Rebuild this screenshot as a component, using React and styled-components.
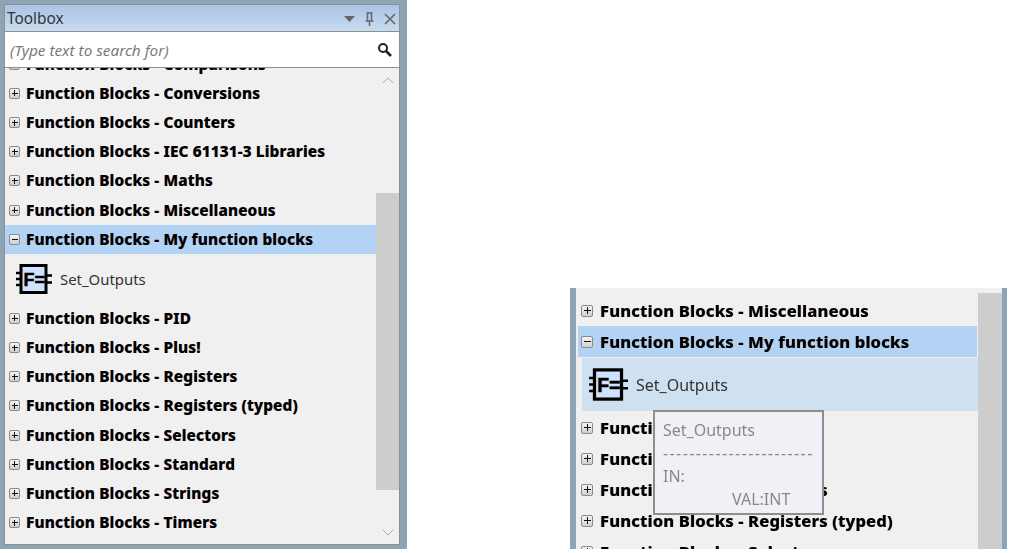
import React from "react";
import styled, { createGlobalStyle } from "styled-components";

const Global = createGlobalStyle`
  html, body { margin: 0; padding: 0; background: #fff; }
  body { width: 1009px; height: 553px; overflow: hidden; font-family: "Noto Sans", "Open Sans", sans-serif; }
`;

const Page = styled.div`
  display: flex;
  align-items: flex-start;
  width: 1009px;
  height: 553px;
  filter: blur(0.4px);
`;

const Frame = styled.section`
  box-sizing: border-box;
  width: 407px;
  height: 549px;
  padding: 4px 7px 4px 4px;
  background: #8ca4b4;
  display: flex;
  flex-direction: column;
`;

const Window = styled.div`
  flex: 1;
  min-height: 0;
  border: 1px solid #8f8f8f;
  background: #f0f0f0;
  display: flex;
  flex-direction: column;
`;

const TitleBar = styled.header`
  height: 26px;
  flex: none;
  box-sizing: border-box;
  display: flex;
  align-items: center;
  justify-content: space-between;
  padding: 1px 3px 0 2px;
  background: linear-gradient(#a9c4e4, #c8dbf0);
  font-size: 15.4px;
  color: #333;
`;

const TitleIcons = styled.div`
  display: flex;
  align-items: center;
  gap: 10px;
  color: #666;
`;

const SearchBox = styled.div`
  height: 37px;
  flex: none;
  box-sizing: border-box;
  border-top: 1px solid #8f8f8f;
  border-bottom: 1px solid #8f8f8f;
  background: #fff;
  display: flex;
  align-items: center;
  justify-content: space-between;
  padding: 0 7px 0 5px;
  font-size: 15.3px;
  font-style: italic;
  color: #7a7a7a;
`;

const Body = styled.div`
  flex: 1;
  min-height: 0;
  display: flex;
`;

const List = styled.div`
  flex: 1;
  min-width: 0;
  overflow: hidden;
  padding-left: ${(p) => p.$inset}px;
`;

const Scrolled = styled.div`
  margin-top: ${(p) => p.$offset}px;
`;

const Row = styled.div`
  height: ${(p) => p.$h}px;
  display: flex;
  align-items: center;
  gap: ${(p) => p.$gap}px;
  padding-left: ${(p) => p.$pl}px;
  margin-right: ${(p) => p.$mr || 0}px;
  background: ${(p) => (p.$sel ? "#b2d3f3" : "transparent")};
  font-weight: 800;
  font-size: ${(p) => p.$fs}px;
  letter-spacing: 0.1px;
  color: #000;
  white-space: nowrap;
  text-shadow: 0.4px 0 rgba(230, 120, 0, 0.35), -0.4px 0 rgba(0, 70, 220, 0.35);
`;

const Toggle = styled.span`
  box-sizing: border-box;
  flex: none;
  width: ${(p) => p.$s}px;
  height: ${(p) => p.$s}px;
  border: 1px solid #8a8a8a;
  border-radius: 2px;
  background: linear-gradient(#f4f4f4, #cfcfcf);
  position: relative;
  &::before {
    content: "";
    position: absolute;
    left: 1.5px;
    right: 1.5px;
    top: calc(50% - 0.5px);
    height: 1px;
    background: #111;
  }
  &::after {
    content: "";
    display: ${(p) => (p.$open ? "none" : "block")};
    position: absolute;
    top: 1.5px;
    bottom: 1.5px;
    left: calc(50% - 0.5px);
    width: 1px;
    background: #111;
  }
`;

const Item = styled.div`
  height: ${(p) => p.$h}px;
  display: flex;
  align-items: center;
  gap: 8px;
  padding-left: ${(p) => p.$pl}px;
  margin-left: ${(p) => p.$ml || 0}px;
  margin-top: ${(p) => p.$mt || 0}px;
  margin-bottom: ${(p) => p.$mb || 0}px;
  background: ${(p) => p.$bg || "transparent"};
  font-size: ${(p) => p.$fs}px;
  color: #333;
`;

const Scrollbar = styled.aside`
  flex: none;
  width: ${(p) => p.$w}px;
  display: flex;
  flex-direction: column;
  align-items: center;
  color: #a9a9a9;
`;

const Arrow = styled.div`
  height: ${(p) => p.$h}px;
  flex: none;
  display: flex;
  align-items: center;
`;

const Thumb = styled.div`
  align-self: stretch;
  flex: none;
  height: ${(p) => p.$h}px;
  margin-top: ${(p) => p.$mt}px;
  margin-bottom: auto;
  background: #cdcdcd;
`;

const Second = styled.section`
  position: relative;
  box-sizing: border-box;
  flex: none;
  width: 437px;
  height: 261px;
  margin: 288px 0 0 163px;
  border-left: 6px solid #8ca4b4;
  border-right: 5px solid #8ca4b4;
  background: #f0f0f0;
  display: flex;
  overflow: hidden;
`;

const Tooltip = styled.div`
  position: absolute;
  left: 77px;
  top: 122px;
  box-sizing: border-box;
  width: 171px;
  height: 105px;
  padding: 7px 8px;
  border: 2px solid #8e8e8e;
  background: #eff1f7;
  color: #888;
  font-size: 16px;
  line-height: 23px;
  white-space: nowrap;
  overflow: hidden;
`;

const TipLine = styled.div`
  padding-left: ${(p) => p.$pl || 0}px;
  letter-spacing: ${(p) => p.$ls || 0}px;
`;

const BlockIcon = ({ w, h }) => (
  <svg width={w} height={h} viewBox="0 0 37 30" style={{ flex: "none" }}>
    <rect x="6" y="1.5" width="25" height="27" fill="#cfe3ff" stroke="#000" strokeWidth="3" />
    <path d="M1 9h4M1 15h4M1 21h4M32 11.500h5M32 18.500h5" stroke="#000" strokeWidth="2.4" />
    <text x="8.500" y="21.500" fontFamily="'Liberation Sans', sans-serif" fontWeight="700" fontSize="18" stroke="#000" strokeWidth="0.5" fill="#000">F=</text>
  </svg>
);

const Tree = ({ rows, h, fs, ts, gap, pl, inset, mr, itemH, itemPl, itemFs, iconW, iconH, itemBg, itemMl, itemMt, itemMb, offset }) => (
  <List $inset={inset}>
    <Scrolled $offset={offset}>
      {rows.map((name) => {
        const open = name === "My function blocks";
        return (
          <React.Fragment key={name}>
            <Row $h={h} $fs={fs} $gap={gap} $pl={pl} $sel={open} $mr={mr}>
              <Toggle $s={ts} $open={open} />
              {`Function Blocks - ${name}`}
            </Row>
            {open && (
              <Item $h={itemH} $pl={itemPl} $fs={itemFs} $bg={itemBg} $ml={itemMl} $mt={itemMt} $mb={itemMb}>
                <BlockIcon w={iconW} h={iconH} />
                Set_Outputs
              </Item>
            )}
          </React.Fragment>
        );
      })}
    </Scrolled>
  </List>
);

const names = [
  "Comparisons", "Conversions", "Counters", "IEC 61131-3 Libraries", "Maths", "Miscellaneous",
  "My function blocks", "PID", "Plus!", "Registers", "Registers (typed)", "Selectors",
  "Standard", "Strings", "Timers",
];

export default function App() {
  return (
    <Page>
      <Global />
      <Frame>
        <Window>
          <TitleBar>
            Toolbox
            <TitleIcons>
              <svg width="11" height="6" viewBox="0 0 11 6"><path d="M0 0h11L5.500 6z" fill="currentColor" /></svg>
              <svg width="9" height="14" viewBox="0 0 9 14" fill="none" stroke="currentColor"><path d="M2.500 1v8M6.500 1v8M0.500 9h8M4.500 9v5M1.500 1h6" strokeWidth="1.5" /></svg>
              <svg width="12" height="12" viewBox="0 0 12 12" fill="none" stroke="currentColor"><path d="M1 1l10 10M11 1L1 11" strokeWidth="1.6" /></svg>
            </TitleIcons>
          </TitleBar>
          <SearchBox>
            (Type text to search for)
            <svg width="15" height="15" viewBox="0 0 15 15" fill="none" stroke="#222"><circle cx="6" cy="6" r="4" strokeWidth="2" /><path d="M9 9l5 5" strokeWidth="2.6" /></svg>
          </SearchBox>
          <Body>
            <Tree rows={names} h={29.2} fs={15.4} ts={11} gap={6} pl={4} inset={0} offset={-18.4} itemH={49.8} itemPl={10} itemFs={14.9} iconW={37} iconH={30} />
            <Scrollbar $w={23}>
              <Arrow $h={24}>
                <svg width="12" height="7" viewBox="0 0 12 7" fill="none" stroke="currentColor"><path d="M1 6l5-5 5 5" /></svg>
              </Arrow>
              <Thumb $h={297} $mt={101} />
              <Arrow $h={24}>
                <svg width="12" height="7" viewBox="0 0 12 7" fill="none" stroke="currentColor"><path d="M1 1l5 5 5-5" /></svg>
              </Arrow>
            </Scrollbar>
          </Body>
        </Window>
      </Frame>
      <Second>
        <Tree
          rows={["Miscellaneous", "My function blocks", "PID", "Plus!", "Registers", "Registers (typed)", "Selectors"]}
          h={31} fs={16.6} ts={12} gap={7} pl={3} inset={2} mr={1} offset={7} itemH={53} itemPl={6} itemFs={16} iconW={40} iconH={33}
          itemBg="#cfe0f1" itemMl={4} itemMt={1} itemMb={1}
        />
        <Scrollbar $w={24}>
          <Thumb $h={300} $mt={5} />
        </Scrollbar>
        <Tooltip>
          <TipLine>Set_Outputs</TipLine>
          <TipLine $ls={1.4}>-----------------------</TipLine>
          <TipLine>IN:</TipLine>
          <TipLine $pl={69}>VAL:INT</TipLine>
        </Tooltip>
      </Second>
    </Page>
  );
}
